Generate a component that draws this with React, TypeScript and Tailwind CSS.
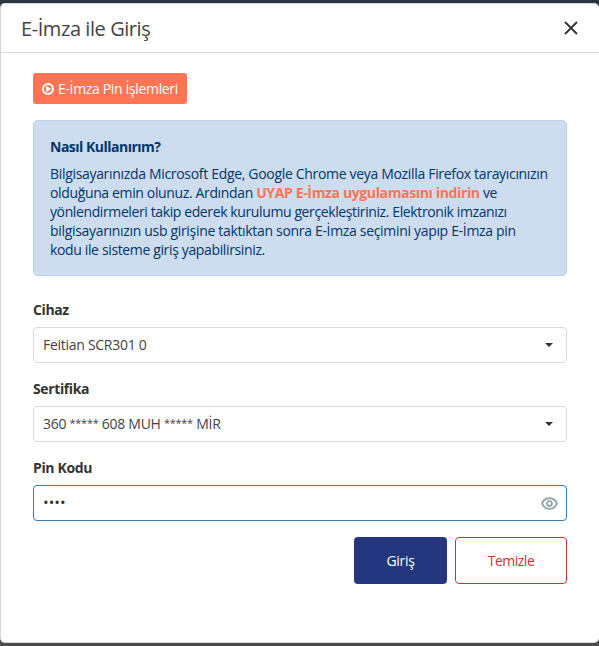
import { useState } from "react";

type TSelectField = {
  label: string;
  value: string;
};

const selectFields: TSelectField[] = [
  { label: "Cihaz", value: "Feitian SCR301 0" },
  { label: "Sertifika", value: "360 ***** 608 MUH ***** MİR" },
];

const SelectField = (props: TSelectField) => {
  const { label, value } = props;

  return (
    <div className="mb-4">
      <label className="block h-[27px] leading-5 font-bold tracking-[-0.38px]">
        {label}
      </label>
      <button
        type="button"
        className="flex w-full h-9 items-center justify-between rounded-[4px] border border-[#dadada] bg-white pl-[9px] pr-[13px] text-left tracking-[-0.28px] text-[#444]"
      >
        <span className="whitespace-pre">
          {/* masked parts are set smaller than the rest */}
          {value.split(/(\*+)/).map((part, index) => (
            <span key={index} className={part.startsWith("*") ? "align-[2px] text-[11px] leading-none" : ""}>
              {part}
            </span>
          ))}
        </span>
        <svg width="8" height="4" viewBox="0 0 8 4" className="fill-[#333]">
          <path d="M0 0h8L4 4z" />
        </svg>
      </button>
    </div>
  );
};

const InfoBox = () => {
  return (
    <section className="h-[156px] rounded-[5px] border border-[#b3cfec] bg-[#cdddef] px-4 pt-4 text-[#01356d]">
      <h2 className="h-[27px] leading-5 font-bold tracking-[-0.5px]">
        Nasıl Kullanırım?
      </h2>
      <p className="whitespace-nowrap leading-[19px] tracking-[-0.32px]">
        Bilgisayarınızda Microsoft Edge, Google Chrome veya Mozilla Firefox tarayıcınızın
        <br />
        <span className="tracking-[-0.36px]">
          olduğuna emin olunuz. Ardından{" "}
          <a href="#" className="font-bold text-[#ff7452]">
            UYAP E-İmza uygulamasını indirin
          </a>{" "}
          ve
        </span>
        <br />
        <span className="tracking-[-0.39px]">
          yönlendirmeleri takip ederek kurulumu gerçekleştiriniz. Elektronik imzanızı
        </span>
        <br />
        bilgisayarınızın usb girişine taktıktan sonra E-İmza seçimini yapıp E-İmza pin
        <br />
        <span className="tracking-[-0.36px]">kodu ile sisteme giriş yapabilirsiniz.</span>
      </p>
    </section>
  );
};

const App = () => {
  const [pin, setPin] = useState("1234");
  const [visible, setVisible] = useState(false);

  return (
    <main className="h-[646px] bg-linear-to-b from-[#2b3643] from-50% to-[#4b4b4b] to-50% pt-[3px] font-['Open_Sans','Noto_Sans',sans-serif] text-sm text-[#333]">
      <div className="h-[640px] rounded-[5px] border border-r-0 border-[#d8d8d8] bg-white">
        <header className="flex h-[49px] items-center justify-between border-b border-[#dadada] pl-5 pr-[21px]">
          <h1 className="pt-0.5 text-xl tracking-[-0.43px] text-[#444]">E-İmza ile Giriş</h1>
          <button type="button" aria-label="Kapat">
            <svg width="14" height="14" viewBox="0 0 14 14" className="stroke-[#333]" strokeWidth="1.8">
              <path d="M1 1l12 12M13 1L1 13" />
            </svg>
          </button>
        </header>
        <div className="pl-8 pr-8 pt-5">
          <button
            type="button"
            className="mb-4 flex h-[31px] w-[154px] items-center rounded-[3px] bg-[#ff7452] pl-[9px] text-white"
          >
            <svg width="12" height="12" viewBox="0 0 12 12" className="mr-1 shrink-0">
              <circle cx="6" cy="6" r="5" fill="none" stroke="white" strokeWidth="2" />
              <path d="M4.2 2.8v6.4L9.4 6z" fill="white" />
            </svg>
            <span className="whitespace-nowrap font-medium tracking-[-0.35px]">E-İmza Pin İşlemleri</span>
          </button>
          <InfoBox />
          <form className="mt-6">
            {selectFields.map((item) => (
              <SelectField key={item.label} {...item} />
            ))}
            <label htmlFor="pin" className="block h-[27px] leading-5 font-bold tracking-[-0.35px]">
              Pin Kodu
            </label>
            <div className="flex h-9 items-center rounded-[4px] border border-[#337ab7] pl-[9px] pr-2">
              <input
                id="pin"
                type={visible ? "text" : "password"}
                value={pin}
                onChange={(e) => setPin(e.target.value)}
                className="min-w-0 flex-1 text-[15px] outline-none"
              />
              <button type="button" aria-label="Göster" onClick={() => setVisible(!visible)}>
                <svg width="17" height="13" viewBox="0 0 17 13" className="fill-none stroke-[#90a4ae]" strokeWidth="1.9">
                  <path d="M1 6.5C2.3 3.3 5.1 1.2 8.5 1.2S14.7 3.3 16 6.5c-1.3 3.2-4.1 5.3-7.5 5.3S2.3 9.7 1 6.5z" />
                  <circle cx="8.5" cy="6.5" r="2.4" />
                </svg>
              </button>
            </div>
            <div className="mt-4 flex justify-end gap-2">
              <button type="button" className="h-[47px] w-[93px] rounded-[4px] bg-[#24377e] text-white tracking-[-0.3px]">
                Giriş
              </button>
              <button type="button" className="h-[47px] w-28 rounded-[4px] border border-[#d32f2f] text-[#d32f2f] tracking-[-0.5px]">
                Temizle
              </button>
            </div>
          </form>
        </div>
      </div>
    </main>
  );
};

export default App;
